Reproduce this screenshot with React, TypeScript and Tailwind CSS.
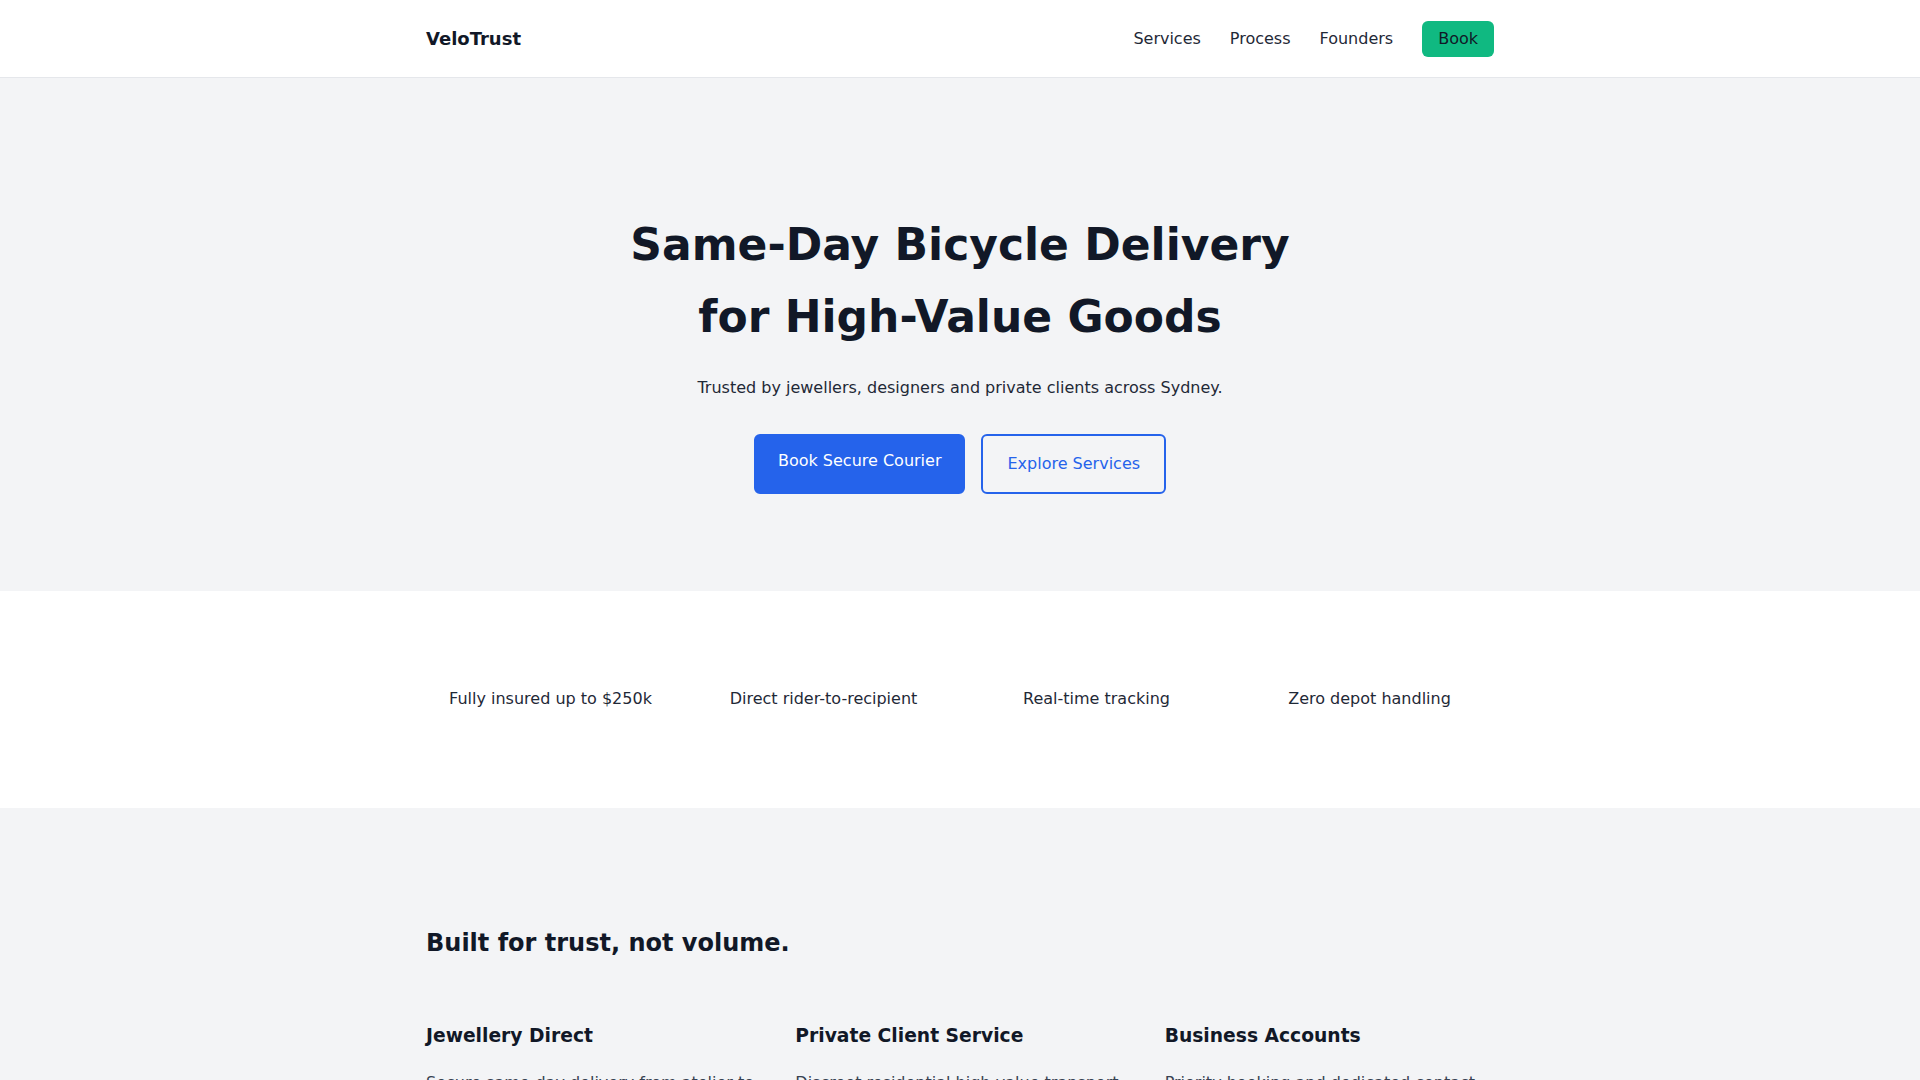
const features = [
  "Fully insured up to $250k",
  "Direct rider-to-recipient",
  "Real-time tracking",
  "Zero depot handling",
];

const services = [
  {
    title: "Jewellery Direct",
    body: "Secure same-day delivery from atelier to client, boutique or workshop across the city.",
  },
  {
    title: "Private Client Service",
    body: "Discreet residential high-value transport for collectors, stylists and private buyers.",
  },
  {
    title: "Business Accounts",
    body: "Priority booking and dedicated contact for studios, galleries and repeat senders.",
  },
];

export default function App() {
  return (
    <div className="min-h-screen bg-white font-['DejaVu_Sans',sans-serif] text-base leading-[1.6] text-[#1f2937]">
      {/* Header */}
      <header className="border-b border-[#e5e7eb] bg-white">
        <div className="mx-auto flex h-[77px] max-w-[1100px] items-center justify-between px-4">
          <span className="text-lg font-bold text-[#111827]">VeloTrust</span>
          <nav className="flex items-center gap-[29px]">
            <a className="text-[#1f2937]">Services</a>
            <a className="text-[#1f2937]">Process</a>
            <a className="text-[#1f2937]">Founders</a>
            <a className="flex h-[36px] items-center rounded-md bg-[#10b981] px-4 text-[#111827]">
              Book
            </a>
          </nav>
        </div>
      </header>

      {/* Hero */}
      <section className="bg-[#f3f4f6] pt-[131px] pb-[97px] text-center">
        <div className="mx-auto max-w-[1100px] px-4">
          <h1 className="text-[44px] font-bold leading-[72px] text-[#111827]">
            Same-Day Bicycle Delivery
            <br />
            for High-Value Goods
          </h1>
          <p className="mt-[22px] text-[#1f2937]">
            Trusted by jewellers, designers and private clients across Sydney.
          </p>
          <div className="mt-[33px] flex justify-center gap-4">
            <a className="flex h-[60px] items-center rounded-md border-2 border-[#2563eb] bg-[#2563eb] px-[22px] pb-[5px] text-white">
              Book Secure Courier
            </a>
            <a className="flex h-[60px] items-center rounded-md border-2 border-[#2563eb] px-[24px] text-[#2563eb]">
              Explore Services
            </a>
          </div>
        </div>
      </section>

      {/* Trust strip */}
      <section className="bg-white pt-[95px] pb-[97px]">
        <div className="mx-auto grid max-w-[1100px] grid-cols-4 gap-6 px-4 text-center">
          {features.map((f) => (
            <div key={f} className="text-[#1f2937]">
              {f}
            </div>
          ))}
        </div>
      </section>

      {/* Services */}
      <section className="bg-[#f3f4f6] py-24">
        <div className="mx-auto max-w-[1100px] px-4">
          <h2 className="mt-5 text-2xl font-bold leading-[1.6] text-[#111827]">
            Built for trust, not volume.
          </h2>
          <div className="mt-10 grid grid-cols-3 gap-10">
            {services.map((s) => (
              <div key={s.title}>
                <h3 className="mt-[18px] text-[1.17rem] font-bold leading-[1.6] text-[#111827]">
                  {s.title}
                </h3>
                <p className="mt-[19px] text-[#374151]">{s.body}</p>
              </div>
            ))}
          </div>
        </div>
      </section>
    </div>
  );
}
